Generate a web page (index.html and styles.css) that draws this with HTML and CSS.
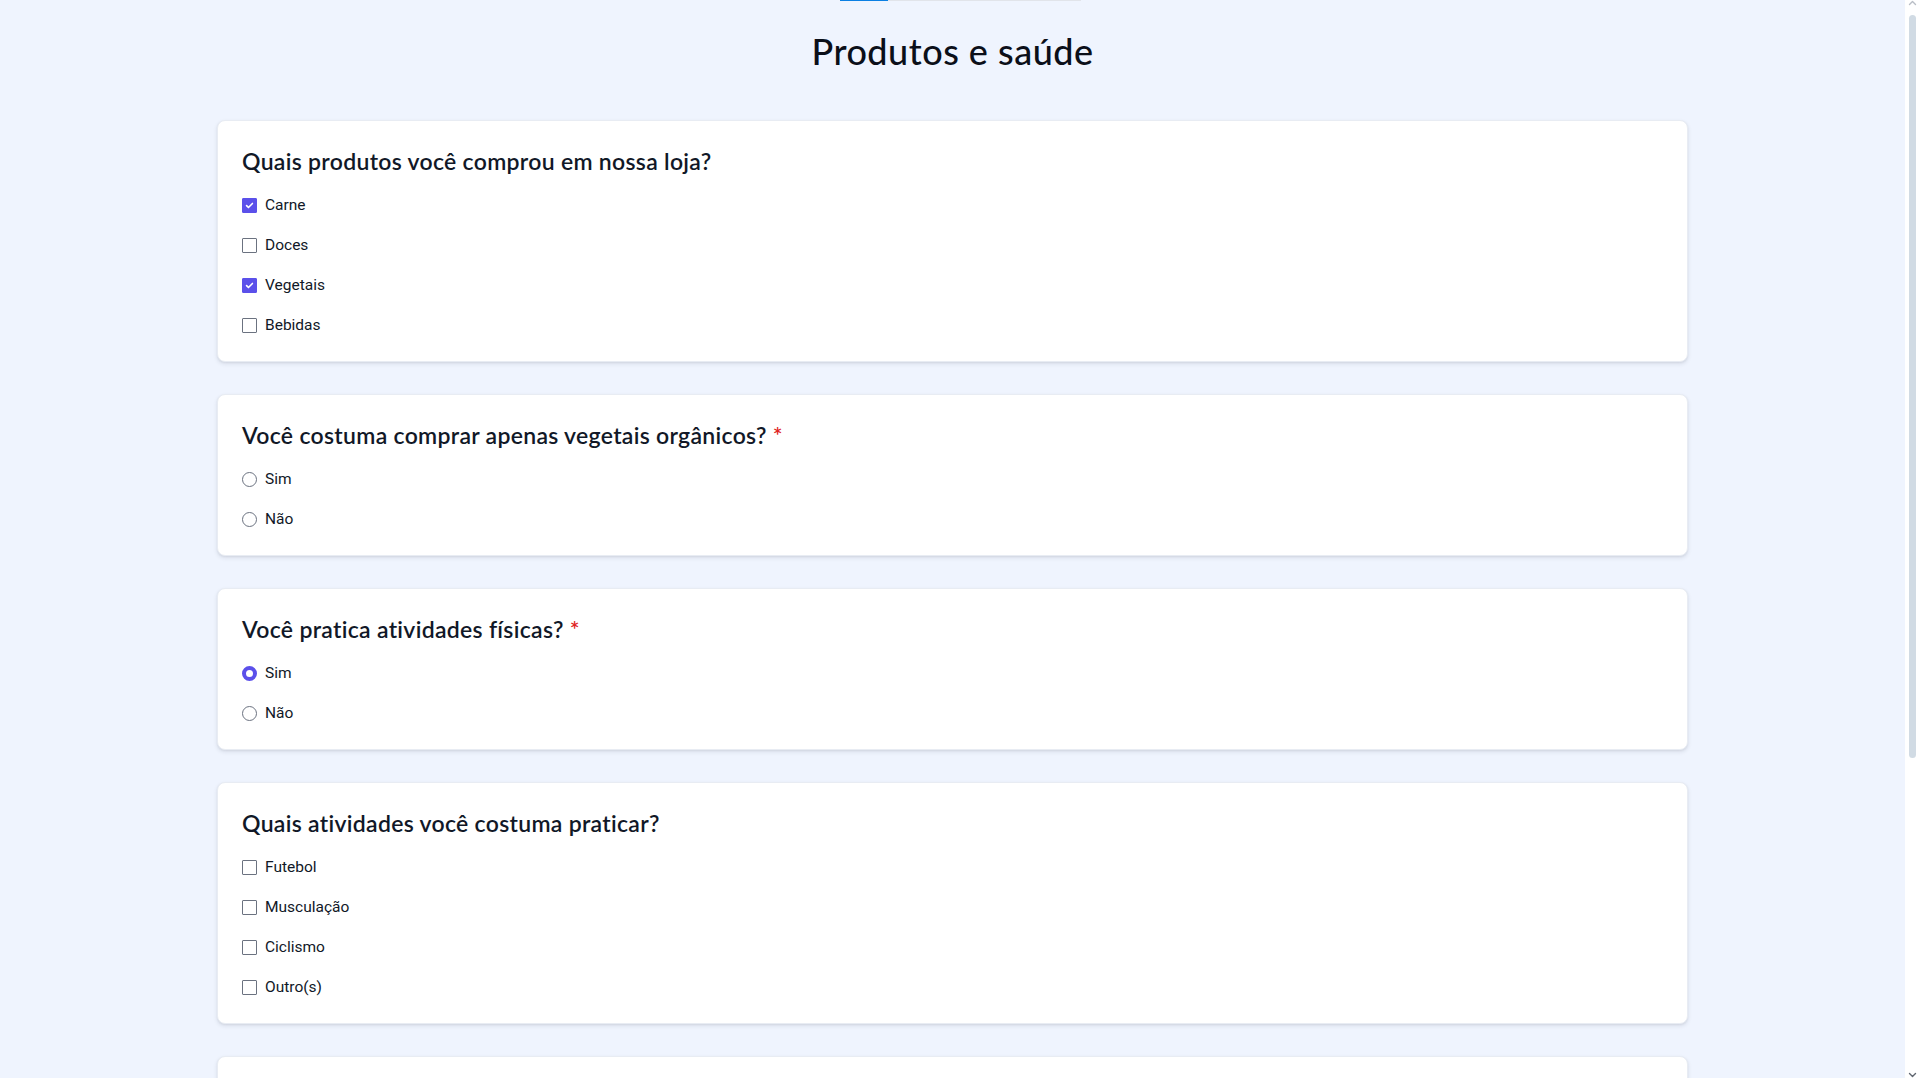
FILE: index.html
```html
<!DOCTYPE html>
<html lang="pt-BR">
<head>
<meta charset="utf-8">
<title>Produtos e saúde</title>
<link rel="stylesheet" href="styles.css">
</head>
<body>
<div class="progress"><div class="progress-fill"></div></div>
<main class="page">
  <h1 class="title">Produtos e saúde</h1>

  <section class="card">
    <h2 class="question">Quais produtos você comprou em nossa loja?</h2>
    <div class="options">
      <label class="option"><span class="check is-checked"><svg viewBox="0 0 16 16"><path d="M4.4 8.2l2.3 2.3 4.9-5" /></svg></span>Carne</label>
      <label class="option"><span class="check"></span>Doces</label>
      <label class="option"><span class="check is-checked"><svg viewBox="0 0 16 16"><path d="M4.4 8.2l2.3 2.3 4.9-5" /></svg></span>Vegetais</label>
      <label class="option"><span class="check"></span>Bebidas</label>
    </div>
  </section>

  <section class="card">
    <h2 class="question">Você costuma comprar apenas vegetais orgânicos? <span class="req">*</span></h2>
    <div class="options">
      <label class="option"><span class="radio"></span>Sim</label>
      <label class="option"><span class="radio"></span>Não</label>
    </div>
  </section>

  <section class="card">
    <h2 class="question">Você pratica atividades físicas? <span class="req">*</span></h2>
    <div class="options">
      <label class="option"><span class="radio is-checked"></span>Sim</label>
      <label class="option"><span class="radio"></span>Não</label>
    </div>
  </section>

  <section class="card">
    <h2 class="question">Quais atividades você costuma praticar?</h2>
    <div class="options">
      <label class="option"><span class="check"></span>Futebol</label>
      <label class="option"><span class="check"></span>Musculação</label>
      <label class="option"><span class="check"></span>Ciclismo</label>
      <label class="option"><span class="check"></span>Outro(s)</label>
    </div>
  </section>

  <section class="card">
    <h2 class="question">Com que frequência você pratica atividades físicas?</h2>
    <div class="options">
      <label class="option"><span class="radio"></span>1 a 2 vezes por semana</label>
      <label class="option"><span class="radio"></span>3 a 4 vezes por semana</label>
      <label class="option"><span class="radio"></span>5 ou mais vezes por semana</label>
    </div>
  </section>

  <div class="actions">
    <button class="btn" type="button">Enviar</button>
  </div>
</main>

<div class="scrollbar" aria-hidden="true">
  <svg class="scroll-arrow up" viewBox="0 0 15 10"><path d="M4.5 6.5l3-3 3 3" /></svg>
  <div class="scroll-thumb"></div>
  <svg class="scroll-arrow down" viewBox="0 0 15 10"><path d="M4.5 3.5l3 3 3-3" /></svg>
</div>
</body>
</html>
```

FILE: styles.css
```css
html {
  background: #eff4fe;
}
body {
  margin: 0;
  padding-right: 15px;
  font-family: "Lato", "Inter", "Liberation Sans", sans-serif;
  color: #111827;
  background: #eff4fe;
}
.progress {
  position: fixed;
  top: 0;
  left: 840px;
  width: 241px;
  height: 1px;
  background: #e1e4ea;
  display: flex;
}
.progress-fill {
  width: 48px;
  background: #0b7fe3;
}
.page {
  max-width: 1471px;
  margin: 0 auto;
  padding: 29px 0 120px;
  display: flex;
  flex-direction: column;
  gap: 32px;
}
.title {
  margin: 0 0 15px;
  text-align: center;
  font-size: 36px;
  font-weight: 500;
  letter-spacing: 0.5px;
  line-height: 44px;
  color: #0b0f19;
}
.card {
  background: #ffffff;
  border: 1px solid #e8ecf3;
  border-radius: 8px;
  box-shadow: 0 2px 4px rgba(30, 41, 59, 0.10), 0 1px 2px rgba(30, 41, 59, 0.06);
  padding: 24px 24px 24px;
}
.question {
  margin: 0 0 16px;
  font-size: 23px;
  font-weight: 600;
  letter-spacing: 0.3px;
  line-height: 32px;
  color: #111827;
}
.req {
  color: #e02424;
}
.options {
  display: flex;
  flex-direction: column;
  gap: 16px;
}
.option {
  display: flex;
  align-items: center;
  gap: 8px;
  font-family: "Roboto", "Liberation Sans", sans-serif;
  font-size: 15.5px;
  line-height: 24px;
  color: #111827;
}
.check {
  width: 15px;
  height: 15px;
  box-sizing: border-box;
  border: 1px solid #6b7280;
  border-radius: 1px;
  background: #ffffff;
  display: flex;
  align-items: center;
  justify-content: center;
  flex: none;
}
.check svg {
  width: 15px;
  height: 15px;
  fill: none;
  stroke: #ffffff;
  stroke-width: 2;
  stroke-linecap: round;
  stroke-linejoin: round;
}
.check.is-checked {
  background: #5b50ea;
  border-color: #5b50ea;
}
.radio {
  width: 15px;
  height: 15px;
  box-sizing: border-box;
  border: 1px solid #6b7280;
  border-radius: 50%;
  background: #ffffff;
  flex: none;
}
.radio.is-checked {
  border: 4.5px solid #5b50ea;
  background: #ffffff;
}
.actions {
  display: flex;
}
.btn {
  font-family: "Lato", sans-serif;
  font-size: 16px;
  font-weight: 600;
  color: #ffffff;
  background: #5b50ea;
  border: none;
  border-radius: 6px;
  padding: 10px 24px;
}

/* window scrollbar drawn over the right edge */
.scrollbar {
  position: fixed;
  top: 0;
  right: 0;
  width: 15px;
  height: 100vh;
  background: #ffffff;
  display: flex;
  flex-direction: column;
  align-items: center;
}
.scroll-arrow {
  width: 15px;
  height: 10px;
  flex: none;
  fill: none;
  stroke-width: 1.4;
  stroke-linecap: round;
  stroke-linejoin: round;
}
.scroll-arrow.up {
  stroke: #b9bec6;
  margin-top: -2px;
}
.scroll-arrow.down {
  stroke: #5f6670;
  margin-top: auto;
  margin-bottom: -2px;
}
.scroll-thumb {
  margin-top: 7px;
  width: 7px;
  height: 743px;
  border-radius: 4px;
  background: #d1dbe4;
}
```
